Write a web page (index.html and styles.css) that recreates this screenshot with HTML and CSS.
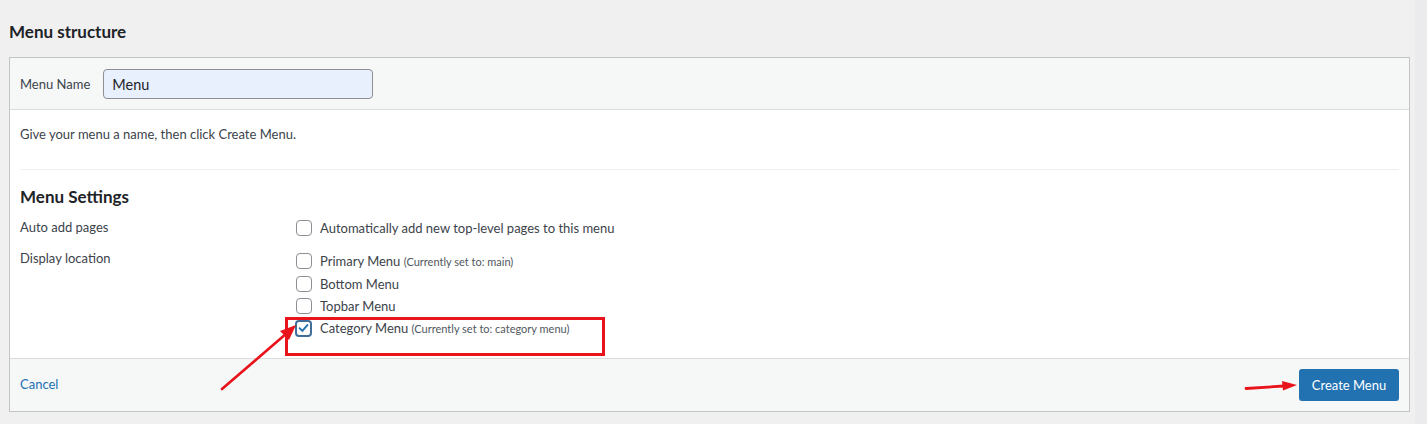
FILE: index.html
```html
<!DOCTYPE html>
<html lang="en">
<head>
<meta charset="utf-8">
<title>Menu structure</title>
<link rel="stylesheet" href="styles.css">
</head>
<body>
<div class="page">
  <h2 class="title">Menu structure</h2>
  <div class="panel">
    <div class="panel-head">
      <label class="name-label" for="menu-name">Menu Name</label>
      <input id="menu-name" class="name-input" type="text" value="Menu">
    </div>
    <div class="panel-body">
      <p class="hint">Give your menu a name, then click Create Menu.</p>
      <div class="sep"></div>
      <h3 class="settings-title">Menu Settings</h3>
      <div class="row row-auto">
        <div class="row-label">Auto add pages</div>
        <div class="row-opts">
          <div class="opt"><span class="cb"></span><span>Automatically add new top-level pages to this menu</span></div>
        </div>
      </div>
      <div class="row row-loc">
        <div class="row-label">Display location</div>
        <div class="row-opts">
          <div class="opt opt-first"><span class="cb"></span><span>Primary Menu <small class="note">(Currently set to: main)</small></span></div>
          <div class="opt"><span class="cb"></span><span>Bottom Menu</span></div>
          <div class="opt"><span class="cb"></span><span>Topbar Menu</span></div>
          <div class="opt"><span class="cb cb-on"><svg viewBox="0 0 16 16" width="14" height="14"><path d="M3.2 8.2 L6.6 11.6 L12.8 4.4" fill="none" stroke="#2271b1" stroke-width="2.4" stroke-linecap="round" stroke-linejoin="round"/></svg></span><span>Category Menu <small class="note">(Currently set to: category menu)</small></span></div>
        </div>
      </div>
    </div>
    <div class="panel-foot">
      <a class="cancel" href="#">Cancel</a>
      <button class="create" type="button">Create Menu</button>
    </div>
  </div>
  <div class="scroll-strip"></div>
  <svg class="annot" width="1427" height="424" viewBox="0 0 1427 424">
    <rect x="286.5" y="318.5" width="317" height="36" fill="none" stroke="#e8131b" stroke-width="3"/>
    <line x1="222" y1="389" x2="287" y2="333" stroke="#e8131b" stroke-width="2.6" stroke-linecap="round"/>
    <polygon points="296,325 280,331 289,340" fill="#e8131b"/>
    <line x1="1246" y1="388.5" x2="1284" y2="386" stroke="#e8131b" stroke-width="2.8" stroke-linecap="round"/>
    <polygon points="1297,385 1282,381 1283,390.5" fill="#e8131b"/>
  </svg>
</div>
</body>
</html>
```
FILE: styles.css
```css
* { box-sizing: border-box; }
html, body { margin: 0; padding: 0; }
body {
  background: #f0f0f1;
  font-family: "Lato", "Noto Sans", sans-serif;
  font-size: 13px;
  color: #3c434a;
  width: 1427px;
  height: 424px;
  overflow: hidden;
}
.page {
  position: relative;
  padding: 0 17px 0 9px;
  height: 424px;
}
.title {
  margin: 0;
  padding: 21px 0 14px;
  font-size: 17px;
  line-height: 22px;
  font-weight: 700;
  color: #1d2327;
}
.panel {
  border: 1px solid #c3c4c7;
  background: #fff;
}
.panel-head {
  display: flex;
  align-items: center;
  gap: 13px;
  background: #f6f7f7;
  border-bottom: 1px solid #dcdcde;
  padding: 11px 10px 10px;
}
.name-label { color: #3c434a; }
.name-input {
  width: 270px;
  height: 30px;
  border: 1px solid #8c8f94;
  border-radius: 4px;
  background: #e8f0fe;
  padding: 0 8px;
  font-family: inherit;
  font-size: 14.5px;
  color: #1d2327;
}
.panel-body {
  padding: 14px 10px 10px;
  height: 248px;
}
.hint { margin: 0; line-height: 20px; }
.sep {
  margin: 25px 0 0;
  height: 1px;
  background: #f0f0f1;
}
.settings-title {
  margin: 16px 0 9px;
  font-size: 17px;
  line-height: 22px;
  font-weight: 700;
  color: #1d2327;
}
.row { display: flex; }
.row-label {
  width: 276px;
  line-height: 20px;
}
.row-auto { margin-bottom: 9px; }
.row-opts { display: flex; flex-direction: column; }
.opt {
  display: flex;
  align-items: center;
  gap: 8px;
  height: 22px;
  color: #3c434a;
}
.opt-first { height: 25px; }
.cb {
  width: 16px;
  height: 16px;
  border: 1px solid #8c8f94;
  border-radius: 4px;
  background: #fff;
  flex: none;
  display: flex;
  align-items: center;
  justify-content: center;
}
.cb-on {
  width: 17px;
  height: 17px;
  margin-left: -1px;
  border: 2px solid #3f6e9a;
}
.note { font-size: 11px; color: #50575e; }
.panel-foot {
  display: flex;
  align-items: center;
  justify-content: space-between;
  background: #f6f7f7;
  border-top: 1px solid #dcdcde;
  padding: 10px 10px 10px;
}
.cancel { color: #2271b1; text-decoration: none; margin-top: -2px; }
.create {
  width: 100px;
  height: 32px;
  border: 0;
  border-radius: 3px;
  background: #2271b1;
  color: #fff;
  font-family: inherit;
  font-size: 13px;
}
.scroll-strip {
  position: absolute;
  top: 0;
  right: 0;
  width: 12px;
  height: 424px;
  background: #ebebed;
}
.annot {
  position: absolute;
  top: 0;
  left: 0;
  pointer-events: none;
}
```
